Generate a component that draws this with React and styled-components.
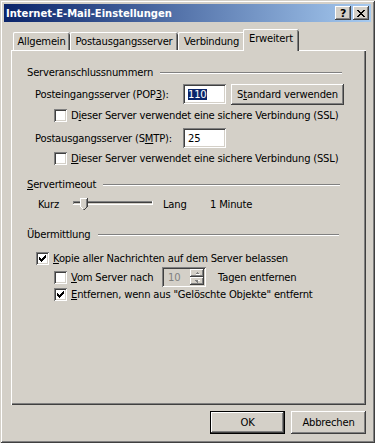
import React from 'react';
import styled, { createGlobalStyle } from 'styled-components';

const Global = createGlobalStyle`
  html, body { margin: 0; padding: 0; background: #d4d0c8; }
  body {
    font-family: "DejaVu Sans", "Liberation Sans", sans-serif;
    font-size: 10px;
    letter-spacing: -0.2px;
    color: #000;
  }
  u { text-decoration: underline; text-underline-offset: 1px; }
`;

const raised = `
  box-shadow: inset -1px -1px #404040, inset 1px 1px #fff, inset -2px -2px #808080;
`;
const sunken = `
  box-shadow: inset 1px 1px #808080, inset -1px -1px #fff, inset 2px 2px #404040, inset -2px -2px #d4d0c8;
`;

const Window = styled.div`
  width: 375px;
  height: 443px;
  box-sizing: border-box;
  padding: 4px;
  background: #d4d0c8;
  box-shadow: inset 1px 1px #d4d0c8, inset -1px -1px #404040, inset 2px 2px #fff, inset -2px -2px #808080;
  display: flex;
  flex-direction: column;
`;

const TitleBar = styled.div`
  height: 18px;
  flex: none;
  display: flex;
  align-items: center;
  padding: 0 2px;
  background: linear-gradient(to right, #0a246a, #a6caf0);
`;

const Title = styled.div`
  flex: 1;
  color: #fff;
  font-weight: bold;
  font-size: 10px;
  letter-spacing: 0;
  white-space: nowrap;
`;

const TitleBtn = styled.div`
  width: 16px;
  height: 14px;
  box-sizing: border-box;
  margin-left: ${p => p.$gap || 0}px;
  background: #d4d0c8;
  ${raised}
  display: flex;
  align-items: center;
  justify-content: center;
  font-weight: bold;
  font-size: 11px;
  line-height: 1;
`;

const Content = styled.div`
  flex: 1;
  display: flex;
  flex-direction: column;
  padding: 7px 5px 0 7px;
`;

const TabStrip = styled.div`
  height: 21px;
  display: flex;
  align-items: flex-end;
  padding-left: 2px;
`;

const Tab = styled.div`
  width: ${p => p.$w}px;
  height: ${p => (p.$active ? 22 : 18)}px;
  margin: ${p => (p.$active ? '0 -2px -1px -2px' : '0')};
  position: relative;
  z-index: ${p => (p.$active ? 1 : 0)};
  box-sizing: border-box;
  background: #d4d0c8;
  border-radius: 2px 2px 0 0;
  box-shadow: inset 1px 0 #fff, inset 0 1px #fff, inset -1px 0 #404040, inset -2px 0 #808080;
  display: flex;
  align-items: center;
  justify-content: center;
  padding-bottom: ${p => (p.$active ? 3 : 0)}px;
  white-space: nowrap;
`;

const Panel = styled.div`
  height: 355px;
  box-sizing: border-box;
  box-shadow: inset 1px 1px #fff, inset -1px -1px #404040, inset -2px -2px #808080;
  padding: 16px 0 0 16px;
  display: flex;
  flex-direction: column;
`;

const GroupHead = styled.div`
  height: 13px;
  display: flex;
  align-items: center;
  margin-top: ${p => p.$top || 0}px;
  margin-right: ${p => p.$right}px;
  white-space: nowrap;
`;

const HeadLine = styled.div`
  flex: 1;
  margin-left: 7px;
  border-top: 1px solid #808080;
  border-bottom: 1px solid #fff;
`;

const Row = styled.div`
  height: ${p => p.$h}px;
  margin-top: ${p => p.$top || 0}px;
  padding-left: ${p => p.$indent || 0}px;
  display: flex;
  align-items: center;
  white-space: nowrap;
`;

const Label = styled.span`
  width: ${p => p.$w}px;
  flex: none;
  margin-left: ${p => p.$gap || 0}px;
`;

const TextBox = styled.div`
  width: 43px;
  height: 20px;
  flex: none;
  box-sizing: border-box;
  background: #fff;
  ${sunken}
  display: flex;
  align-items: center;
  padding-left: 5px;
`;

const Selected = styled.span`
  background: #0a246a;
  color: #fff;
`;

const Button = styled.div`
  width: ${p => p.$w}px;
  height: ${p => p.$h}px;
  flex: none;
  box-sizing: border-box;
  margin-left: ${p => p.$gap || 0}px;
  background: #d4d0c8;
  ${p => (p.$default
    ? 'box-shadow: inset 0 0 0 1px #000, inset -2px -2px #404040, inset 2px 2px #fff, inset -3px -3px #808080;'
    : raised)}
  display: flex;
  align-items: center;
  justify-content: center;
`;

const Box = styled.span`
  width: 13px;
  height: 13px;
  flex: none;
  box-sizing: border-box;
  margin-right: 4px;
  background: #fff;
  ${sunken}
  display: flex;
  align-items: center;
  justify-content: center;
`;

const Spin = styled.div`
  width: 44px;
  height: 20px;
  flex: none;
  box-sizing: border-box;
  padding: 2px;
  background: #d4d0c8;
  ${sunken}
  display: flex;
`;

const SpinText = styled.div`
  flex: 1;
  color: #808080;
  padding-left: 4px;
  display: flex;
  align-items: center;
`;

const SpinBtns = styled.div`
  width: 14px;
  display: flex;
  flex-direction: column;
`;

const SpinBtn = styled.div`
  flex: 1;
  background: #d4d0c8;
  ${raised}
  display: flex;
  align-items: center;
  justify-content: center;
`;

const ButtonRow = styled.div`
  margin-top: 6px;
  display: flex;
  justify-content: flex-end;
`;

const CheckMark = () => {
  const cols = [2, 3, 4, 3, 2, 1, 0];
  return (
    <svg width="7" height="7" viewBox="0 0 7 7" shapeRendering="crispEdges">
      {cols.map((y, x) => <rect key={x} x={x} y={y} width="1" height="3" fill="#000" />)}
    </svg>
  );
};

const Check = ({ checked, children, w }) => (
  <>
    <Box>{checked && <CheckMark />}</Box>
    {w ? <Label $w={w}>{children}</Label> : <span>{children}</span>}
  </>
);

const CloseGlyph = () => (
  <svg width="8" height="7" viewBox="0 0 8 7" shapeRendering="crispEdges">
    {[0, 1, 2, 3, 4, 5, 6].map(i => (
      <g key={i}>
        <rect x={i} y={i} width="2" height="1" fill="#000" />
        <rect x={6 - i} y={i} width="2" height="1" fill="#000" />
      </g>
    ))}
  </svg>
);

const Arrow = ({ up }) => (
  <svg width="5" height="3" viewBox="0 0 5 3" shapeRendering="crispEdges">
    {up ? (
      <>
        <rect x="2" y="0" width="1" height="1" fill="#808080" />
        <rect x="1" y="1" width="3" height="1" fill="#808080" />
        <rect x="1" y="2" width="4" height="1" fill="#fff" />
      </>
    ) : (
      <>
        <rect x="0" y="0" width="3" height="1" fill="#808080" />
        <rect x="3" y="0" width="2" height="1" fill="#fff" />
        <rect x="1" y="1" width="2" height="1" fill="#808080" />
        <rect x="2" y="2" width="1" height="1" fill="#808080" />
      </>
    )}
  </svg>
);

const Slider = () => (
  <svg width="80" height="13" viewBox="0 0 80 13" shapeRendering="crispEdges" style={{ flex: 'none' }}>
    <rect x="0" y="3" width="80" height="1" fill="#808080" />
    <rect x="1" y="4" width="78" height="1" fill="#404040" />
    <rect x="0" y="6" width="80" height="1" fill="#fff" />
    <rect x="79" y="3" width="1" height="4" fill="#fff" />
    <rect x="0" y="3" width="1" height="3" fill="#808080" />
    <polygon points="7,0 15,0 15,8 11,12 7,8" fill="#d4d0c8" />
    <rect x="7" y="0" width="7" height="1" fill="#fff" />
    <rect x="7" y="0" width="1" height="9" fill="#fff" />
    <rect x="14" y="0" width="1" height="9" fill="#404040" />
    <rect x="13" y="1" width="1" height="8" fill="#808080" />
    <rect x="8" y="9" width="1" height="1" fill="#fff" />
    <rect x="9" y="10" width="1" height="1" fill="#fff" />
    <rect x="13" y="9" width="1" height="1" fill="#404040" />
    <rect x="12" y="10" width="1" height="1" fill="#404040" />
    <rect x="11" y="11" width="1" height="1" fill="#404040" />
    <rect x="10" y="11" width="1" height="1" fill="#808080" />
  </svg>
);

export default function App() {
  return (
    <Window>
      <Global />
      <TitleBar>
        <Title>Internet-E-Mail-Einstellungen</Title>
        <TitleBtn>?</TitleBtn>
        <TitleBtn $gap={2}><CloseGlyph /></TitleBtn>
      </TitleBar>
      <Content>
        <TabStrip>
          <Tab $w={57}>Allgemein</Tab>
          <Tab $w={108}>Postausgangsserver</Tab>
          <Tab $w={67}>Verbindung</Tab>
          <Tab $w={56} $active>Erweitert</Tab>
        </TabStrip>
        <Panel>
          <GroupHead $right={24}>Serveranschlussnummern<HeadLine /></GroupHead>
          <Row $h={22} $top={4} $indent={8}>
            <Label $w={148}>Posteingangsserver (POP<u>3</u>):</Label>
            <TextBox><Selected>110</Selected></TextBox>
            <Button $w={113} $h={21} $gap={5}>S<u>t</u>andard verwenden</Button>
          </Row>
          <Row $h={13} $top={4} $indent={27}>
            <Check>D<u>i</u>eser Server verwendet eine sichere Verbindung (SSL)</Check>
          </Row>
          <Row $h={20} $top={6} $indent={8}>
            <Label $w={148}>Postausgangsserver (S<u>M</u>TP):</Label>
            <TextBox>25</TextBox>
          </Row>
          <Row $h={13} $top={4} $indent={27}>
            <Check><u>D</u>ieser Server verwendet eine sichere Verbindung (SSL)</Check>
          </Row>

          <GroupHead $top={13} $right={26}><span><u>S</u>ervertimeout</span><HeadLine /></GroupHead>
          <Row $h={13} $top={7} $indent={11}>
            <Label $w={35}>Kurz</Label>
            <Slider />
            <Label $w={47} $gap={10}>Lang</Label>
            <span>1 Minute</span>
          </Row>

          <GroupHead $top={17} $right={27}>Übermittlung<HeadLine /></GroupHead>
          <Row $h={13} $top={11} $indent={9}>
            <Check checked><u>K</u>opie aller Nachrichten auf dem Server belassen</Check>
          </Row>
          <Row $h={20} $top={2} $indent={27}>
            <Check w={91}><u>V</u>om Server nach</Check>
            <Spin>
              <SpinText>10</SpinText>
              <SpinBtns>
                <SpinBtn><Arrow up /></SpinBtn>
                <SpinBtn><Arrow /></SpinBtn>
              </SpinBtns>
            </Spin>
            <Label $w={120} $gap={12}>Tagen entfernen</Label>
          </Row>
          <Row $h={13} $top={1} $indent={27}>
            <Check checked><u>E</u>ntfernen, wenn aus "Gelöschte Objekte" entfernt</Check>
          </Row>
        </Panel>
        <ButtonRow>
          <Button $w={75} $h={23} $default>OK</Button>
          <Button $w={75} $h={23} $gap={6}>Abbrechen</Button>
        </ButtonRow>
      </Content>
    </Window>
  );
}
